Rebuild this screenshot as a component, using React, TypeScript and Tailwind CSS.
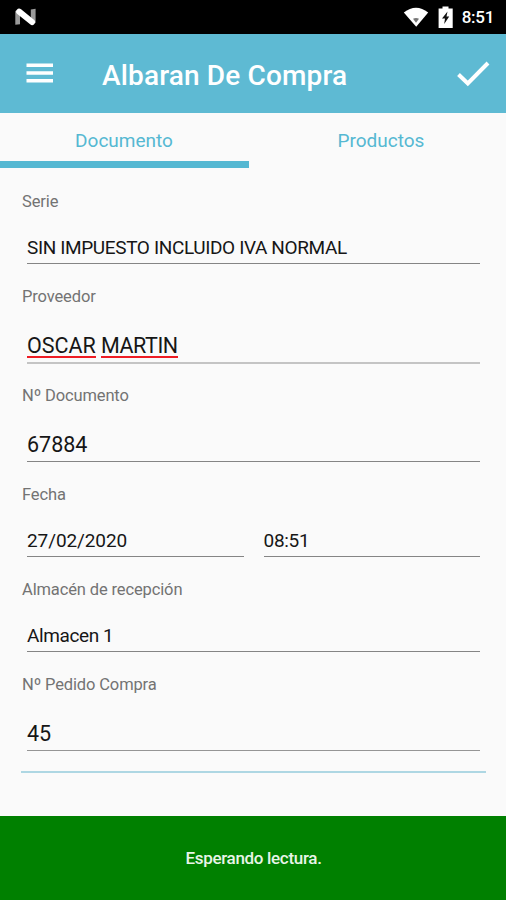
import type { ReactNode } from "react";

function Field({ label, children }: { label: string; children: ReactNode }) {
  return (
    <div className="mb-[21px]">
      <div className="h-6 pl-[22px] text-[16.5px] leading-[23px] tracking-[-0.13px] text-[#737373] whitespace-nowrap">
        <span>{label}</span>
      </div>
      {children}
    </div>
  );
}

function Small({ text, className }: { text: string; className: string }) {
  return (
    <div className="flex h-[50px] flex-1 items-end border-b border-[#858585] pb-[3px] text-[19px] leading-6 text-[#161616] whitespace-nowrap">
      <span className={className}>{text}</span>
    </div>
  );
}

function StatusBar() {
  return (
    <div className="flex h-[34px] items-center bg-black pl-[15px] pr-3 text-white">
      <svg width="22" height="18" viewBox="0 0 22 18">
        <path d="M.3 3 5 1v15.300l-4.700.4zM15.800 1.500l4.800-.8V15l-4.800-2z" fill="#9a9a9a" />
        <path d="M4.200 3.600 17 14" fill="none" stroke="#fff" strokeWidth="6" strokeLinecap="round" />
      </svg>
      <svg className="ml-auto" width="26" height="20" viewBox="0 0 26 20">
        <path d="M.8 5.500Q13-4 25.200 5.500L13.200 19.800z" fill="#fff" />
        <path d="M10 11.800q3-1.800 6 0l-3 4z" fill="#777" />
      </svg>
      <svg className="ml-[9px]" width="16" height="22" viewBox="0 0 16 22">
        <path d="M4.500 .5h6v2h4.200v19.500H.6V2.500h3.900z" fill="#fff" />
        <path d="M9.500 5.500 4 12.500h3L6.200 18l5-7.500H8.500z" fill="#111" />
      </svg>
      <span className="ml-[8px] text-[17px] font-medium leading-6 tracking-[-0.3px]">8:51</span>
    </div>
  );
}

export default function App() {
  return (
    <div className="flex h-[900px] w-[506px] flex-col overflow-hidden bg-[#fafafa] font-['Roboto',sans-serif]">
      <StatusBar />
      <header className="flex h-[79px] items-center bg-[#5ebad3] pl-[26px] pr-4 text-white">
        <svg width="27" height="21" viewBox="0 0 27 21">
          <path d="M.5 2.300h26.500M.5 10h26.500M.5 17.700h26.500" stroke="#fff" strokeWidth="3.600" />
        </svg>
        <h1 className="ml-[49px] pt-[4px] text-[28px] font-medium leading-8 tracking-[0.16px] whitespace-nowrap">Albaran De Compra</h1>
        <svg className="ml-auto" width="34" height="26" viewBox="0 0 34 26">
          <path d="M2.500 13.500 11.800 22.500 32 2" fill="none" stroke="#fff" strokeWidth="4" />
        </svg>
      </header>
      <nav className="grid h-[55px] grid-cols-[249px_257px] text-[19px] leading-6 text-[#55b8d2]">
        <div className="flex justify-center border-b-[7px] border-[#55b8d2] pt-4 pr-px">
          <span>Documento</span>
        </div>
        <div className="flex justify-center pt-4 pl-[7px]">
          <span>Productos</span>
        </div>
      </nav>
      <main className="h-[648px] pt-[22px]">
        <Field label="Serie">
          <div className="flex pl-[27px] pr-[26px]">
            <Small text="SIN IMPUESTO INCLUIDO IVA NORMAL" className="tracking-[-0.37px]" />
          </div>
        </Field>
        <Field label="Proveedor">
          <div className="ml-[27px] mr-[26px] -mb-px flex h-[55px] items-end gap-[5px] border-b-2 border-[#c4c4c4] pb-[4px] text-[21.500px] text-[#161616]">
            <span className="h-[26px] w-[69px] border-b-2 border-[#ee1c24] leading-[27px]">OSCAR</span>
            <span className="h-[26px] w-[77px] border-b-2 border-[#ee1c24] leading-[27px] tracking-[-0.45px]">MARTIN</span>
          </div>
        </Field>
        <Field label="Nº Documento">
          <div className="ml-[27px] mr-[26px] flex h-[54px] items-end border-b border-[#858585] pb-[3px] text-[21.500px] leading-[26px] text-[#161616]">
            <span>67884</span>
          </div>
        </Field>
        <Field label="Fecha">
          <div className="flex gap-5 pl-[27px] pr-[26px]">
            <Small text="27/02/2020" className="tracking-[-0.1px]" />
            <Small text="08:51" className="tracking-[-0.3px]" />
          </div>
        </Field>
        <Field label="Almacén de recepción">
          <div className="flex pl-[27px] pr-[26px]">
            <Small text="Almacen 1" className="tracking-[-0.4px]" />
          </div>
        </Field>
        <Field label="Nº Pedido Compra">
          <div className="ml-[27px] mr-[26px] flex h-[54px] items-end border-b border-[#959595] pb-[3px] text-[21.500px] leading-[26px] text-[#161616]">
            <span>45</span>
          </div>
        </Field>
        <div className="-mt-px ml-[21px] mr-5 h-0.5 bg-[#aed7e3]" />
      </main>
      <footer className="flex flex-1 items-center justify-center bg-[#008000] pl-px pt-[2px] text-[17px] font-medium tracking-[-0.32px] text-[#e8f5e8]">
        <span>Esperando lectura.</span>
      </footer>
    </div>
  );
}
